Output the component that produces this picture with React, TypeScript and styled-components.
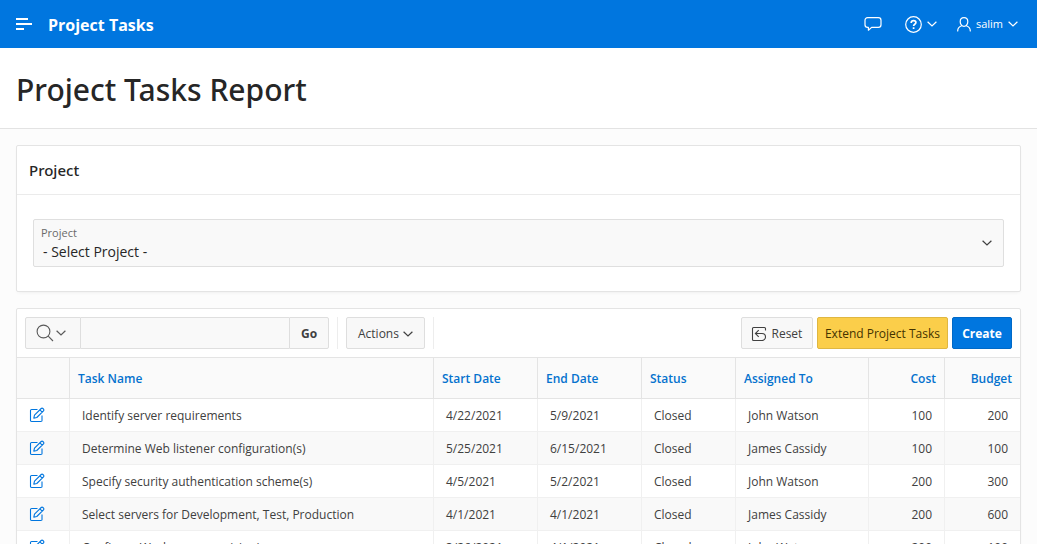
import React from "react";
import styled, { createGlobalStyle, css } from "styled-components";

const GlobalStyle = createGlobalStyle`
  *, *::before, *::after { box-sizing: border-box; }
  body {
    margin: 0;
    background: #fcfcfc;
    color: #262626;
    font-family: "Segoe UI", "Open Sans", "Noto Sans", sans-serif;
    font-size: 12px;
    line-height: 16px;
  }
  button, input, select { font: inherit; color: inherit; margin: 0; }
`;

const Header = styled.header`
  display: flex;
  align-items: center;
  height: 48px;
  padding: 0 16px;
  background: #0076df;
  color: #fff;
`;

const HeaderButton = styled.button`
  display: flex;
  align-items: center;
  justify-content: center;
  gap: 5px;
  min-width: 16px;
  padding: 0;
  border: 0;
  background: none;
  font-size: 11px;
  cursor: pointer;
`;

const FeedbackButton = styled(HeaderButton)`
  min-width: 24px;
`;

const AppName = styled.a`
  margin-left: 16px;
  padding-top: 2px;
  color: inherit;
  font-size: 16px;
  font-weight: 700;
  line-height: 24px;
  text-decoration: none;
`;

const HeaderNav = styled.nav`
  display: flex;
  align-items: center;
  gap: 20px;
  margin-left: auto;
  padding-right: 3px;
`;

const TitleBar = styled.div`
  padding: 22px 16px 18px;
  background: #fff;
  border-bottom: 1px solid #e3e3e3;
`;

const PageTitle = styled.h1`
  margin: 0;
  font-family: "Segoe UI", "Noto Sans", "Open Sans", sans-serif;
  font-size: 30px;
  font-weight: 500;
  line-height: 40px;
`;

const Content = styled.main`
  display: flex;
  flex-direction: column;
  gap: 16px;
  padding: 16px;
`;

const Region = styled.section`
  background: #fff;
  border: 1px solid #e4e4e4;
  border-radius: 2px;
  box-shadow: 0 2px 4px -2px rgba(0, 0, 0, 0.08);
`;

const RegionTitle = styled.h2`
  margin: 0;
  padding: 12px;
  border-bottom: 1px solid #ebebeb;
  font-family: "Segoe UI", "Noto Sans", "Open Sans", sans-serif;
  font-size: 15px;
  font-weight: 500;
  line-height: 24px;
`;

const RegionBody = styled.div`
  padding: 24px 16px;
`;

const SelectField = styled.div`
  display: grid;
  grid-template-columns: 1fr 32px;
  align-items: center;
  height: 48px;
  background: #f9f9f9;
  border: 1px solid #dfdfdf;
  border-radius: 2px;
  color: #404040;
`;

const FieldLabel = styled.label`
  grid-area: 1 / 1;
  align-self: start;
  padding: 5px 7px;
  color: #6a6a6a;
  font-size: 11px;
`;

const Select = styled.select`
  grid-area: 1 / 1 / 2 / 3;
  width: 100%;
  height: 46px;
  padding: 20px 32px 2px 9px;
  border: 0;
  background: transparent;
  color: #262626;
  font-size: 14px;
  line-height: 24px;
  appearance: none;
`;

const SelectArrow = styled.span`
  grid-area: 1 / 2;
  display: flex;
  justify-content: center;
  pointer-events: none;
`;

const Toolbar = styled.div`
  display: flex;
  gap: 8px;
  padding: 8px;
`;

const SearchGroup = styled.form`
  display: flex;
`;

const buttonKinds = {
  plain: css`
    background: #f8f8f8;
    border-color: #dedede;
    color: #404040;
  `,
  warning: css`
    background: #fbce4a;
    border-color: #dfb742;
    color: #443300;
  `,
  hot: css`
    background: #0076df;
    border-color: #0069c7;
    color: #fff;
  `,
};

const Button = styled.button<{ $kind?: keyof typeof buttonKinds; $strong?: boolean }>`
  display: flex;
  align-items: center;
  justify-content: center;
  gap: 4px;
  height: 32px;
  padding: 2px 11px 0;
  border: 1px solid;
  border-radius: 2px;
  font-weight: ${(p) => (p.$strong ? 700 : 400)};
  white-space: nowrap;
  cursor: pointer;
  ${(p) => buttonKinds[p.$kind ?? "plain"]}
`;

const SearchOptions = styled(Button)`
  gap: 2px;
  width: 56px;
  padding: 0 4px 0 0;
  border-radius: 2px 0 0 2px;
  color: #5a5a5a;
`;

const SearchInput = styled.input`
  width: 208px;
  height: 32px;
  padding: 0 8px;
  background: #f9f9f9;
  border: solid #dfdfdf;
  border-width: 1px 0;
`;

const GoButton = styled(Button)`
  width: 40px;
  border-radius: 0 2px 2px 0;
`;

const Divider = styled.span`
  width: 1px;
  background: #ededed;
`;

const ToolbarActions = styled.div`
  display: flex;
  gap: 4px;
  margin-left: auto;
`;

const ActionButton = styled(Button)`
  min-width: 60px;
  padding-inline: 7px;
`;

const ResetButton = styled(ActionButton)`
  min-width: 72px;
`;

const Table = styled.table`
  width: 100%;
  table-layout: fixed;
  border-collapse: separate;
  border-spacing: 0;
  border-top: 1px solid #e4e4e4;
`;

const Col = styled.col<{ $width?: number }>`
  width: ${(p) => (p.$width ? `${p.$width}px` : "auto")};
`;

const HeadCell = styled.th<{ $end?: boolean }>`
  height: 41px;
  padding: 2px 8px 0;
  background: #fafafa;
  border: solid #e4e4e4;
  border-width: 0 1px 1px 0;
  text-align: ${(p) => (p.$end ? "right" : "left")};
  &:last-child { border-right: 0; }
`;

const SortLink = styled.a`
  color: #0572ce;
  font-weight: 600;
  text-decoration: none;
`;

const Row = styled.tr`
  background: #fff;
  &:nth-child(even) { background: #f9f9f9; }
`;

const Cell = styled.td<{ $end?: boolean }>`
  height: 33px;
  padding: 2px 12px 0;
  border: solid #f0f0f0;
  border-width: 0 1px 1px 0;
  color: #404040;
  text-align: ${(p) => (p.$end ? "right" : "left")};
  white-space: nowrap;
  &:last-child { border-right: 0; }
`;

const EditLink = styled.a`
  display: flex;
  padding-bottom: 2px;
  color: #0076df;
`;

const Svg = styled.svg`
  display: block;
  flex: none;
  fill: none;
  stroke: currentColor;
`;

const Chevron = () => (
  <Svg width="10" height="6" viewBox="0 0 10 6" strokeWidth="1.2" aria-hidden="true">
    <path d="M0.6 0.7 5 5 9.4 0.7" />
  </Svg>
);

const MenuIcon = () => (
  <Svg width="16" height="12" viewBox="0 0 16 12" strokeWidth="2" aria-hidden="true">
    <path d="M0 1h12M0 6h16M0 11h8" />
  </Svg>
);

const CommentIcon = () => (
  <Svg width="18" height="14" viewBox="0 0 18 14" strokeWidth="1.2" strokeLinejoin="round" aria-hidden="true">
    <path d="M3.6.6h10.8a2.6 2.6 0 0 1 2.6 2.6v4.6a2.6 2.6 0 0 1-2.6 2.6H7.6L4.4 13.2v-2.8h-.8A2.6 2.6 0 0 1 1 7.8V3.2A2.6 2.6 0 0 1 3.6.6Z" />
  </Svg>
);

const HelpIcon = () => (
  <Svg width="17" height="17" viewBox="0 0 17 17" strokeWidth="1.2" aria-hidden="true">
    <circle cx="8.5" cy="8.5" r="7.8" />
    <path strokeWidth="1.7" d="M6.2 6.9c0-1.5 1-2.3 2.4-2.3s2.3.8 2.3 2c0 1.7-2.3 1.6-2.3 3.4M8.6 11.2v1.7" />
  </Svg>
);

const UserIcon = () => (
  <Svg width="14" height="15" viewBox="0 0 14 15" strokeWidth="1.2" strokeLinecap="round" aria-hidden="true">
    <path d="M7 .7c2.4 0 3.8 1.7 3.8 4S9.2 9.3 7 9.3 3.2 7 3.2 4.7 4.6.7 7 .7ZM4.7 8.8C2.2 9.7.7 11.3.7 14M9.3 8.8c2.5.9 4 2.5 4 5.2" />
  </Svg>
);

const SearchIcon = () => (
  <Svg width="18" height="18" viewBox="0 0 18 18" strokeWidth="1.1" aria-hidden="true">
    <circle cx="7.5" cy="7.5" r="6.4" />
    <path d="M12.2 12.2 17 17" />
  </Svg>
);

const ResetIcon = () => (
  <Svg width="16" height="16" viewBox="0 0 16 16" strokeWidth="1.1" aria-hidden="true">
    <path d="M14.5 4.5v-2a1 1 0 0 0-1-1h-11a1 1 0 0 0-1 1v11a1 1 0 0 0 1 1H11a3.500 3.500 0 0 0 0-7H4.500M7.700 4.200 4.400 7.500l3.300 3.300" />
  </Svg>
);

const EditIcon = () => (
  <Svg width="16" height="16" viewBox="0 0 16 16" strokeWidth="1.1" strokeLinejoin="round" aria-hidden="true">
    <path d="M8.5 2.5H2.6a1.1 1.1 0 0 0-1.1 1.1v9.8a1.1 1.1 0 0 0 1.1 1.1h9.3a1.1 1.1 0 0 0 1.1-1.1V8.5" />
    <path d="M4.8 11.2 5.5 8.2 12.2 1.5a1.2 1.2 0 0 1 1.7 0l.6.6a1.2 1.2 0 0 1 0 1.700L7.800 10.500ZM10.900 2.800l2.300 2.300" />
  </Svg>
);

type Column = { label: string; width?: number; end?: boolean };

const columns: Column[] = [
  { label: "Task Name" },
  { label: "Start Date", width: 104 },
  { label: "End Date", width: 104 },
  { label: "Status", width: 94 },
  { label: "Assigned To", width: 133 },
  { label: "Cost", width: 76, end: true },
  { label: "Budget", width: 75, end: true },
];

const tasks = [
  ["Identify server requirements", "4/22/2021", "5/9/2021", "Closed", "John Watson", "100", "200"],
  ["Determine Web listener configuration(s)", "5/25/2021", "6/15/2021", "Closed", "James Cassidy", "100", "100"],
  ["Specify security authentication scheme(s)", "4/5/2021", "5/2/2021", "Closed", "John Watson", "200", "300"],
  ["Select servers for Development, Test, Production", "4/1/2021", "4/1/2021", "Closed", "James Cassidy", "200", "600"],
  ["Configure Workspace provisioning", "3/26/2021", "4/1/2021", "Closed", "John Watson", "200", "100"],
];

export default function App() {
  return (
    <>
      <GlobalStyle />
      <Header>
        <HeaderButton type="button" aria-label="Main navigation">
          <MenuIcon />
        </HeaderButton>
        <AppName href="#home">Project Tasks</AppName>
        <HeaderNav>
          <FeedbackButton type="button" aria-label="Feedback">
            <CommentIcon />
          </FeedbackButton>
          <HeaderButton type="button" aria-label="Help">
            <HelpIcon />
            <Chevron />
          </HeaderButton>
          <HeaderButton type="button">
            <UserIcon />
            salim
            <Chevron />
          </HeaderButton>
        </HeaderNav>
      </Header>
      <TitleBar>
        <PageTitle>Project Tasks Report</PageTitle>
      </TitleBar>
      <Content>
        <Region>
          <RegionTitle>Project</RegionTitle>
          <RegionBody>
            <SelectField>
              <FieldLabel htmlFor="project">Project</FieldLabel>
              <Select id="project">
                <option>- Select Project -</option>
              </Select>
              <SelectArrow>
                <Chevron />
              </SelectArrow>
            </SelectField>
          </RegionBody>
        </Region>
        <Region>
          <Toolbar>
            <SearchGroup onSubmit={(e) => e.preventDefault()}>
              <SearchOptions type="button" aria-label="Select columns to search">
                <SearchIcon />
                <Chevron />
              </SearchOptions>
              <SearchInput type="text" aria-label="Search report" />
              <GoButton type="submit" $strong>
                Go
              </GoButton>
            </SearchGroup>
            <Divider />
            <Button type="button">
              Actions
              <Chevron />
            </Button>
            <Divider />
            <ToolbarActions>
              <ResetButton type="button">
                <ResetIcon />
                Reset
              </ResetButton>
              <ActionButton type="button" $kind="warning">
                Extend Project Tasks
              </ActionButton>
              <ActionButton type="button" $kind="hot" $strong>
                Create
              </ActionButton>
            </ToolbarActions>
          </Toolbar>
          <Table>
            <colgroup>
              <Col $width={53} />
              {columns.map((c) => (
                <Col key={c.label} $width={c.width} />
              ))}
            </colgroup>
            <thead>
              <tr>
                <HeadCell aria-label="Edit" />
                {columns.map((c) => (
                  <HeadCell key={c.label} scope="col" $end={c.end}>
                    <SortLink href="#sort">{c.label}</SortLink>
                  </HeadCell>
                ))}
              </tr>
            </thead>
            <tbody>
              {tasks.map((task) => (
                <Row key={task[0]}>
                  <Cell>
                    <EditLink href="#edit" aria-label={`Edit ${task[0]}`}>
                      <EditIcon />
                    </EditLink>
                  </Cell>
                  {task.map((value, i) => (
                    <Cell key={columns[i].label} $end={columns[i].end}>
                      {value}
                    </Cell>
                  ))}
                </Row>
              ))}
            </tbody>
          </Table>
        </Region>
      </Content>
    </>
  );
}
